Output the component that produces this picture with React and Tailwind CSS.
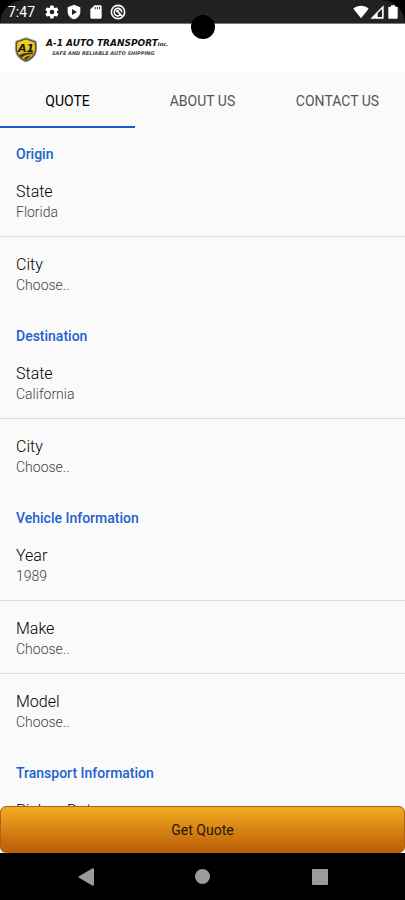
import { useState } from "react";

const sections = [
  {
    title: "Origin",
    fields: [
      { id: "origin-state", label: "State", value: "Florida" },
      { id: "origin-city", label: "City", value: "Choose.." },
    ],
  },
  {
    title: "Destination",
    fields: [
      { id: "destination-state", label: "State", value: "California" },
      { id: "destination-city", label: "City", value: "Choose.." },
    ],
  },
  {
    title: "Vehicle Information",
    fields: [
      { id: "vehicle-year", label: "Year", value: "1989" },
      { id: "vehicle-make", label: "Make", value: "Choose.." },
      { id: "vehicle-model", label: "Model", value: "Choose.." },
    ],
  },
  {
    title: "Transport Information",
    fields: [{ id: "pickup-date", label: "Pickup Date", value: "Choose.." }],
  },
];

const tabs = ["QUOTE", "ABOUT US", "CONTACT US"];

function StatusBar() {
  return (
    <div className="relative shrink-0 bg-black">
      <div className="flex h-6 items-center justify-between rounded-t-3xl border-b border-[#777] bg-[#222] pl-2 pr-1 text-white">
        <div className="flex items-center gap-1.5">
          <span className="w-[30px] text-sm leading-6">7:47</span>
          <svg className="size-4" viewBox="0 0 24 24" fill="currentColor">
            <path d="M19.4 13a7.500 7.500 0 0 0 0-2l2.100-1.600a.5.5 0 0 0 .1-.6l-2-3.500a.5.5 0 0 0-.6-.2l-2.500 1a7.300 7.300 0 0 0-1.700-1l-.4-2.600a.5.5 0 0 0-.5-.4h-4a.5.5 0 0 0-.5.4L9 5.100a7.700 7.700 0 0 0-1.700 1l-2.500-1a.5.5 0 0 0-.6.2l-2 3.500a.5.5 0 0 0 .1.6L4.500 11a7.900 7.900 0 0 0 0 2l-2.200 1.600a.5.5 0 0 0-.1.6l2 3.500c.1.2.4.3.6.2l2.500-1c.5.4 1.100.7 1.700 1l.4 2.600c0 .2.2.4.5.4h4c.3 0 .5-.2.5-.4l.4-2.600a7.300 7.300 0 0 0 1.700-1l2.500 1c.2.1.5 0 .6-.2l2-3.500a.5.5 0 0 0-.1-.6zM12 15.500a3.500 3.500 0 1 1 0-7 3.500 3.500 0 0 1 0 7z" />
          </svg>
          <svg className="size-4" viewBox="0 0 24 24" fill="currentColor">
            <path fillRule="evenodd" d="M12 1 2.500 5v6.500C2.500 17 6.500 21.500 12 23c5.500-1.500 9.500-6 9.500-11.500V5zM9 7.500l7.500 4.500L9 16.500z" />
          </svg>
          <svg className="size-4" viewBox="0 0 24 24" fill="currentColor">
            <path fillRule="evenodd" d="M18.500 2H10L3.500 8v12c0 1.100.9 2 2 2h13c1.100 0 2-.9 2-2V4c0-1.100-.9-2-2-2zM10 4.500h1.500v3.500H10zm3.300 0h1.500v3.500h-1.500zm3.300 0h1.500v3.500h-1.500z" />
          </svg>
          <svg className="size-4" viewBox="0 0 24 24" fill="none" stroke="currentColor" strokeWidth="2.4">
            <circle cx="12" cy="12" r="10" />
            <path d="M15 16.800A5.600 5.600 0 1 1 17.500 12.500M9.500 9.500l9 9" />
            <path d="M10 12a2.500 2.500 0 0 1 4-1.500" strokeWidth="1.600" />
          </svg>
        </div>
        <div className="flex items-center">
          <svg className="size-4" viewBox="0 0 24 24" fill="currentColor">
            <path d="M12 21.500 23.500 7C20 4 16 2.800 12 2.800S4 4 .5 7z" />
          </svg>
          <svg className="size-4" viewBox="0 0 24 24" fill="currentColor">
            <path fillRule="evenodd" d="M2 22h20V2zM13 14l6.500-6.500v12H13z" />
          </svg>
          <svg className="size-4" viewBox="0 0 24 24" fill="currentColor">
            <path d="M9 2h6v2h2.500c.8 0 1.500.7 1.500 1.500v15c0 .8-.7 1.500-1.500 1.500h-11c-.8 0-1.500-.7-1.500-1.500v-15C5 4.700 5.700 4 6.500 4H9z" />
          </svg>
        </div>
      </div>
      {/* camera cutout */}
      <div className="absolute left-1/2 top-[15px] size-6 -translate-x-1/2 rounded-full bg-black" />
    </div>
  );
}

function Header() {
  return (
    <header className="flex h-[49px] shrink-0 items-start gap-2 bg-white px-[14px] pt-[13px]">
      <svg className="h-[26px] w-6" viewBox="0 0 24 26">
        <defs>
          <linearGradient id="shield" x1="0" y1="0" x2="0" y2="1">
            <stop offset="0" stopColor="#f8d51c" />
            <stop offset="1" stopColor="#dca90a" />
          </linearGradient>
        </defs>
        <path d="M12 .8 22 4.200c1 5 1.200 9-.6 13.200C19.500 21 16 23.500 12 25 8 23.500 4.500 21 2.600 17.400.8 13.200 1 9.200 2 4.200z" fill="#4b4b4b" stroke="#9a9a9a" strokeWidth="1" />
        <path d="M12 2.500 20.500 5.400c.8 4.600.8 8-.6 11.400-1.700 3-4.500 5-7.900 6.400-3.400-1.400-6.200-3.400-7.900-6.400C2.700 13.400 2.700 10 3.500 5.400z" fill="url(#shield)" />
        <path d="M5 18.500c4-2.500 8-3.200 14.500-2.800l-.8 1.500c-4.500-.3-8 .7-10.700 3.300zM10 21.500c2-2 4.500-3 7-3L12 23z" fill="#373520" />
        <text x="12" y="15" textAnchor="middle" fontFamily="DejaVu Sans" fontWeight="700" fontStyle="italic" fontSize="11" fill="#161616">A1</text>
      </svg>
      <div className="flex flex-col items-start whitespace-nowrap font-['DejaVu_Sans',sans-serif] font-bold italic text-[#111]">
        <div className="flex items-baseline leading-3">
          <span className="text-[9px]">A-1 AUTO TRANSPORT</span>
          <span className="text-[5px]">Inc.</span>
        </div>
        <span className="pl-1.5 text-[5px] leading-[6px] text-[#444]">SAFE AND RELIABLE AUTO SHIPPING</span>
      </div>
    </header>
  );
}

function Field({ id, label, value }) {
  return (
    <div className="flex flex-col border-b border-[#dcdcdc] px-4 py-4 last:border-transparent">
      <label htmlFor={id} className="text-base font-light leading-6 text-black">
        {label}
      </label>
      <select
        id={id}
        defaultValue={value}
        className="h-4 w-full appearance-none bg-transparent p-0 text-sm font-light leading-4 text-[#444] outline-none"
      >
        <option>{value}</option>
      </select>
    </div>
  );
}

function Triangle() {
  return (
    <svg className="h-[18px] w-4" viewBox="0 0 16 18" fill="#9b9b9b">
      <path d="M14.200.6C15.200 0 16 .4 16 1.500v15c0 1.100-.8 1.500-1.800.9L1 9.700c-.7-.4-.7-1 0-1.400z" />
    </svg>
  );
}

export default function App() {
  const [activeTab, setActiveTab] = useState("QUOTE");

  return (
    <div className="flex h-screen flex-col overflow-hidden bg-[#fafafa] font-[Roboto,sans-serif]">
      <StatusBar />
      <Header />

      <nav className="grid h-[55px] shrink-0 grid-cols-3">
        {tabs.map((tab) => (
          <button
            key={tab}
            onClick={() => setActiveTab(tab)}
            className={`border-b-2 pt-0.5 text-sm ${
              activeTab === tab ? "border-[#2456d0] text-black" : "border-transparent text-[#555]"
            }`}
          >
            {tab}
          </button>
        ))}
      </nav>

      <main className="min-h-0 flex-1 overflow-y-auto [scrollbar-width:none]">
        {sections.map((section) => (
          <section key={section.title}>
            <h2 className="px-4 pt-4 text-sm font-medium leading-5 text-[#1d62cf]">{section.title}</h2>
            <div>
              {section.fields.map((field) => (
                <Field key={field.id} {...field} />
              ))}
            </div>
          </section>
        ))}
      </main>

      <button className="h-[47px] shrink-0 rounded-md border border-[#b0620f] bg-linear-to-b from-[#f3ab20] to-[#ba5d07] text-sm text-[#24160a]">
        Get Quote
      </button>

      <div className="grid h-[47px] shrink-0 grid-cols-3 items-center bg-black px-[27px]">
        <button aria-label="Back" className="flex justify-center">
          <Triangle />
        </button>
        <button aria-label="Home" className="flex justify-center">
          <span className="size-[15px] rounded-full bg-[#9b9b9b]" />
        </button>
        <button aria-label="Overview" className="flex justify-center">
          <span className="size-4 rounded-[1px] bg-[#9b9b9b]" />
        </button>
      </div>
    </div>
  );
}
